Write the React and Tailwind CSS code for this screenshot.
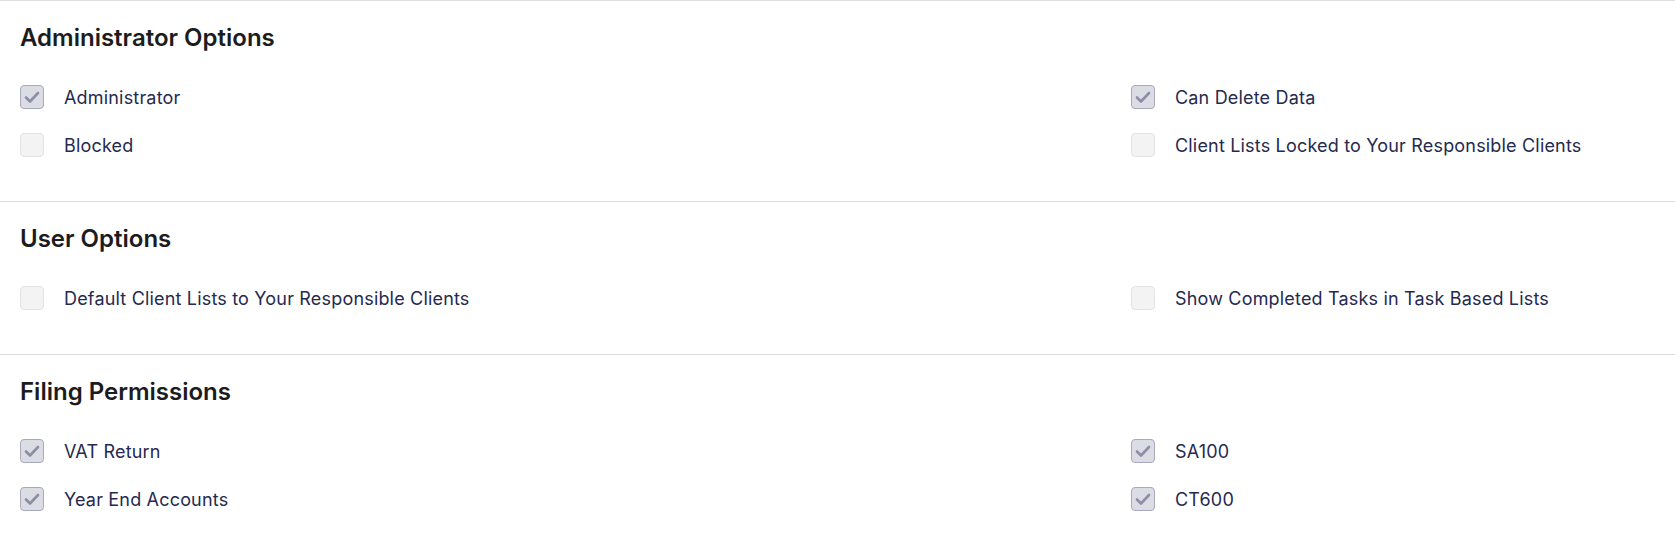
import React from "react";

function Box({ checked }) {
  return checked ? (
    <span className="flex h-[24px] w-[24px] shrink-0 items-center justify-center rounded-[4px] border border-[#a9a9bd] bg-[#dcdce5]">
      <svg width="22" height="22" viewBox="0 0 22 22" fill="none">
        <path d="M5 11.5 L9 15.5 L17 7" stroke="#8d8da8" strokeWidth="2.6" strokeLinecap="round" strokeLinejoin="round" />
      </svg>
    </span>
  ) : (
    <span className="block h-[24px] w-[24px] shrink-0 rounded-[4px] border border-[#e3e3e3] bg-[#f3f3f3]" />
  );
}

function Item({ label, checked }) {
  return (
    <div className="flex h-[48px] items-center gap-[20px]">
      <Box checked={checked} />
      <span className="text-[18px] text-[#252a4f] tracking-[0.01em]">{label}</span>
    </div>
  );
}

function Section({ title, rows }) {
  return (
    <section className="border-t border-[#dedede] px-[20px] pt-[22px] pb-[32px]">
      <h2 className="text-[24px] font-semibold leading-[30px] text-[#1c1c1c]">{title}</h2>
      <div className="mt-[20px] grid grid-cols-[1111px_1fr]">
        {rows.map(([a, b], i) => (
          <React.Fragment key={i}>
            <Item label={a[0]} checked={a[1]} />
            <Item label={b[0]} checked={b[1]} />
          </React.Fragment>
        ))}
      </div>
    </section>
  );
}

export default function App() {
  return (
    <div className="min-h-[538px] w-full bg-white" style={{ fontFamily: "Inter, 'Noto Sans', sans-serif" }}>
      <Section
        title="Administrator Options"
        rows={[
          [["Administrator", true], ["Can Delete Data", true]],
          [["Blocked", false], ["Client Lists Locked to Your Responsible Clients", false]],
        ]}
      />
      <Section
        title="User Options"
        rows={[[["Default Client Lists to Your Responsible Clients", false], ["Show Completed Tasks in Task Based Lists", false]]]}
      />
      <Section
        title="Filing Permissions"
        rows={[
          [["VAT Return", true], ["SA100", true]],
          [["Year End Accounts", true], ["CT600", true]],
        ]}
      />
    </div>
  );
}
